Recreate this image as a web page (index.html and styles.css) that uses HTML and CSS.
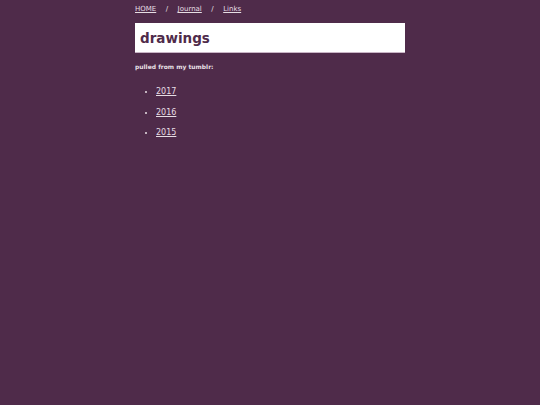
FILE: index.html
```html
<!DOCTYPE html>
<html>
<head>
<meta charset="utf-8">
<link rel="stylesheet" href="styles.css">
</head>
<body>
<div class="wrap">
  <nav class="nav">
    <a href="#">HOME</a><span class="sep">/</span><a href="#">Journal</a><span class="sep">/</span><a href="#">Links</a>
  </nav>
  <header class="title"><h1>drawings</h1></header>
  <p class="intro">pulled from my tumblr:</p>
  <ul class="years">
    <li><a href="#">2017</a></li>
    <li><a href="#">2016</a></li>
    <li><a href="#">2015</a></li>
  </ul>
</div>
</body>
</html>
```
FILE: styles.css
```css
html, body {
  margin: 0;
  padding: 0;
  background: #4f2b4a;
  font-family: "DejaVu Sans", Verdana, sans-serif;
  color: #e8e0e6;
}
.wrap {
  width: 270px;
  margin: 0 auto;
  padding-top: 4px;
}
.nav {
  font-size: 7px;
  line-height: 10px;
  height: 10px;
}
.nav a {
  color: #e6dde4;
}
.sep {
  margin: 0 9.5px;
}
.title {
  margin-top: 9px;
  background: #ffffff;
  border-bottom: 1px solid #c9b5c6;
  height: 29px;
  display: flex;
  align-items: center;
  padding-left: 5px;
}
.title h1 {
  margin: 0;
  font-size: 13.5px;
  font-weight: bold;
  color: #4f2b4a;
}
.intro {
  margin: 10px 0 0 0;
  font-size: 6px;
  font-weight: bold;
  line-height: 8px;
}
.years {
  margin: 16px 0 0 0;
  padding-left: 21px;
  font-size: 8px;
  line-height: 10px;
}
.years li {
  margin-bottom: 10.5px;
}
.years a {
  color: #e6dde4;
}
```
